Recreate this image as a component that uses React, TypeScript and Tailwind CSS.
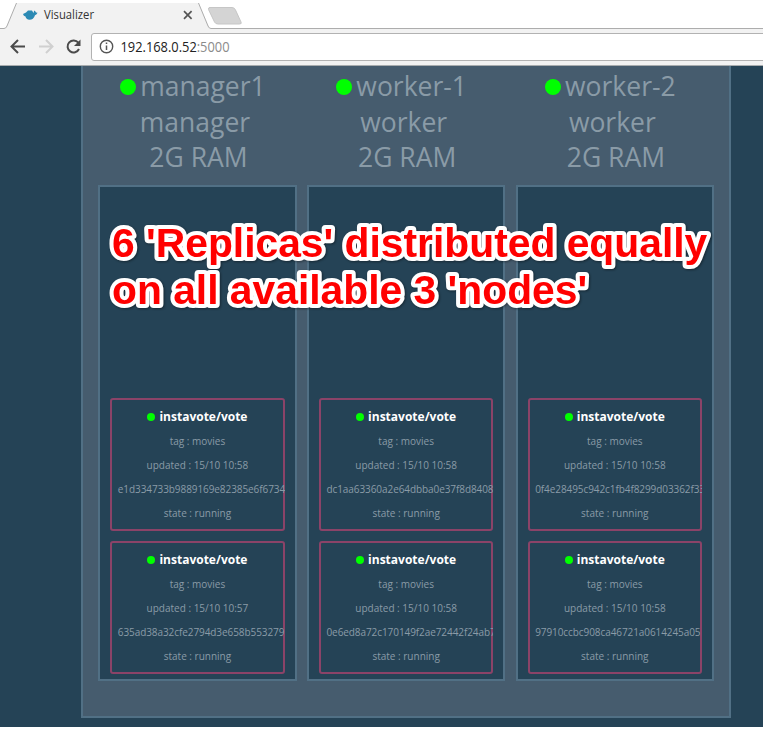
import React from "react";

type Task = { updated: string; id: string };
type Node = { name: string; role: string; tasks: Task[] };

const nodes: Node[] = [
  {
    name: "manager1",
    role: "manager",
    tasks: [
      { updated: "15/10 10:58", id: "e1d334733b9889169e82385e6f6734" },
      { updated: "15/10 10:57", id: "635ad38a32cfe2794d3e658b553279" },
    ],
  },
  {
    name: "worker-1",
    role: "worker",
    tasks: [
      { updated: "15/10 10:58", id: "dc1aa63360a2e64dbba0e37f8d8408" },
      { updated: "15/10 10:58", id: "0e6ed8a72c170149f2ae72442f24ab7" },
    ],
  },
  {
    name: "worker-2",
    role: "worker",
    tasks: [
      { updated: "15/10 10:58", id: "0f4e28495c942c1fb4f8299d03362f33" },
      { updated: "15/10 10:58", id: "97910ccbc908ca46721a0614245a05" },
    ],
  },
];

function TaskCard({ task }: { task: Task }) {
  return (
    <div className="h-[133px] w-[174.3px] rounded-[3px] border-2 border-[#8b4368] pt-[5px] text-center text-[10px] leading-[24px] text-[#8a9ba7]">
      <div className="flex items-center justify-center gap-[4px] text-[12px] font-bold text-white">
        <span className="h-2 w-2 rounded-full bg-[#00ff00]" />
        <span>instavote/vote</span>
      </div>
      <div>tag : movies</div>
      <div>updated : {task.updated}</div>
      <div className="-mr-[2px] overflow-hidden pl-[5.5px] text-left tracking-[-0.08px] whitespace-nowrap">{task.id}</div>
      <div>state : running</div>
    </div>
  );
}

function NodeColumn({ node }: { node: Node }) {
  return (
    <div className="flex w-[198.4px] shrink-0 flex-col">
      <div className="h-[119px] pt-[3px] text-center text-[26.5px] leading-[35.7px] text-[#8a9ba7]">
        <div className="flex items-center justify-center gap-[4px] pr-[9px]">
          <span className="h-4 w-4 rounded-full bg-[#00ff00]" />
          <span>{node.name}</span>
        </div>
        <div className="pr-[5px]">{node.role}</div>
        <div className="pl-[2px]">2G RAM</div>
      </div>
      <div className="flex h-[496px] flex-col justify-end gap-[10px] border-2 border-[#517085] bg-[#254356] pb-[5px] pl-[10px]">
        {node.tasks.map((t) => (
          <TaskCard key={t.id} task={t} />
        ))}
      </div>
    </div>
  );
}

function BrowserChrome() {
  return (
    <svg className="block h-[66px] w-full" viewBox="0 0 763 66" fill="none">
      <rect width="763" height="66" fill="#fff" />
      <path d="M0 28.5H5.5L16.5 3H198.5L210 28.5H763V66H0Z" fill="#f2f2f2" />
      <path d="M0 28.5H4Q6 28.500 7 26L16.500 3M198.500 3L208 26Q209 28.500 211 28.500H763" stroke="#adadad" />
      <path d="M209 7.500H232Q234.500 7.500 235.500 10L241 22Q242 24 239.500 24H218Q215.500 24 214.500 22L208.500 9.500Q208 7.500 210 7.500Z" fill="#d4d4d4" stroke="#c6c6c6" />
      <path d="M23 14L26 12.500L28 10.500H32L33.500 13Q34 11.500 34 10.500Q35.500 11 36 12.500L37.500 12.800Q37 14.500 35 15.200Q33.500 19.800 29.500 19.800Q26 19.500 25.500 16.500Q23.500 16 23 14Z" fill="#2c8ab4" />
      <path d="M184 11.200L191.600 18.800M191.600 11.200L184 18.800" stroke="#555" strokeWidth="1.7" />
      <path d="M25 46.500H12M18 40L11.500 46.500L18 53" stroke="#4b4b4b" strokeWidth="2" />
      <path d="M39 46.500H52M46 40L52.500 46.500L46 53" stroke="#d0d0d0" strokeWidth="2" />
      <path d="M78.300 42.700A6 6 0 1 0 79 49" stroke="#4b4b4b" strokeWidth="2" />
      <path d="M80.500 39.500V46H74Z" fill="#4b4b4b" />
      <rect x="91.500" y="33.500" width="690" height="27" rx="2.500" fill="#fff" stroke="#b2b2b2" />
      <circle cx="106.500" cy="46.500" r="6.200" stroke="#555" strokeWidth="1.400" />
      <path d="M106.500 45.500V50M106.500 42.500V44" stroke="#555" strokeWidth="1.500" />
      <rect y="65" width="763" height="1" fill="#a8acae" />
      <text x="44" y="19" fill="#333" className="font-['Open_Sans',sans-serif] text-[12px]" textLength="50" lengthAdjust="spacingAndGlyphs">Visualizer</text>
      <text x="120.5" y="52" fill="#222" className="font-['Open_Sans',sans-serif] text-[14px]" textLength="109" lengthAdjust="spacingAndGlyphs">
        192.168.0.52<tspan fill="#8b8b8b">:5000</tspan>
      </text>
    </svg>
  );
}

function Annotation() {
  return (
    <svg
      className="absolute top-[215px] left-[100px] h-[110px] w-[630px] font-['Liberation_Sans',Arial,sans-serif] text-[40.8px] font-bold drop-shadow-[1px_1px_1px_rgba(0,0,0,0.4)] [paint-order:stroke_fill]"
      viewBox="0 0 630 110"
      fill="#ff0000"
      stroke="#fff"
      strokeWidth="8"
      strokeLinejoin="round"
    >
      <text x="12" y="42">6 'Replicas' distributed equally</text>
      <text x="12" y="89">on all available 3 'nodes'</text>
    </svg>
  );
}

export default function App() {
  return (
    <div className="relative h-[731px] w-[763px] overflow-hidden bg-white font-['Open_Sans',sans-serif]">
      <BrowserChrome />
      <main className="h-[661px] bg-[#254356] pl-[81px]">
        <section className="flex h-[652px] w-[650px] gap-[10.3px] border-x-2 border-b-2 border-[#517085] bg-[#465c6e] pl-[15.3px]">
          {nodes.map((n) => (
            <NodeColumn key={n.name} node={n} />
          ))}
        </section>
      </main>
      <Annotation />
    </div>
  );
}
